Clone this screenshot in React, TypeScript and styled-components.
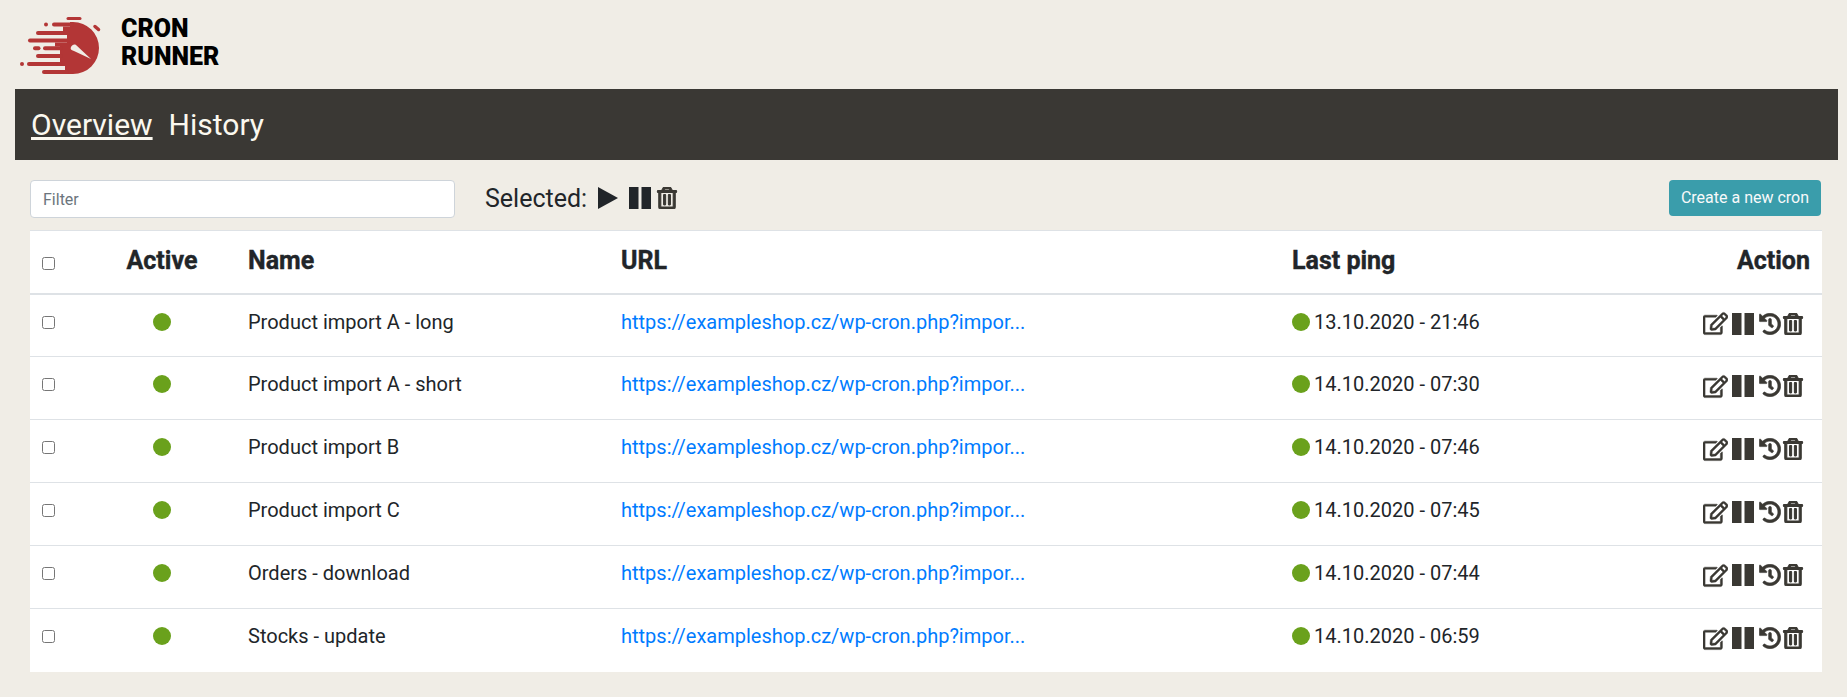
import React from "react";
import styled, { createGlobalStyle } from "styled-components";
import { FaRegEdit, FaHistory, FaRegTrashAlt } from "react-icons/fa";

const Global = createGlobalStyle`
  html, body { margin: 0; padding: 0; background: #f0ede6; }
  body { font-family: Roboto, "Liberation Sans", sans-serif; color: #212529; }
`;

const Page = styled.div`
  padding: 0 9px 0 15px;
`;
const Header = styled.header`
  display: flex;
  align-items: center;
  height: 89px;
  gap: 16px;
`;
const Brand = styled.div`
  font-family: Roboto, sans-serif;
  font-weight: 900;
  font-size: 25px;
  line-height: 28px;
  color: #000;
  position: relative;
  top: -2px;
`;
const Nav = styled.nav`
  display: flex;
  align-items: center;
  gap: 16px;
  height: 71px;
  background: #3a3834;
  padding: 0 16px;
`;
const NavLink = styled.a<{ $active?: boolean }>`
  font-size: 30px;
  color: #fbf8ef;
  text-decoration: ${(p) => (p.$active ? "underline" : "none")};
`;
const Content = styled.main`
  padding: 20px 17px 0 15px;
`;
const Toolbar = styled.div`
  display: flex;
  align-items: flex-start;
  height: 38px;
  margin-bottom: 12px;
`;
const FilterInput = styled.input`
  box-sizing: border-box;
  width: 425px;
  height: 38px;
  padding: 6px 12px;
  font: 16px Roboto, sans-serif;
  color: #495057;
  background: #fff;
  border: 1px solid #ced4da;
  border-radius: 4px;
  &::placeholder { color: #6c757d; }
`;
const Selected = styled.div`
  display: flex;
  align-items: center;
  height: 36px;
  margin-left: 30px;
  font-size: 25px;
  color: #212529;
  svg { display: block; }
`;
const SelectedLabel = styled.span`
  margin-right: 11px;
`;
const PlayIcon = styled.svg`
  margin-right: 11px;
`;
const PauseIcon = styled.svg`
  margin-right: 5px;
`;
const CreateButton = styled.button`
  margin-left: auto;
  width: 152px;
  height: 36px;
  padding: 0 0 2px;
  font: 16px Roboto, sans-serif;
  color: #f8f9fa;
  background: #3a9dab;
  border: 0;
  border-radius: 4px;
`;
const Table = styled.table`
  width: 100%;
  table-layout: fixed;
  border-collapse: collapse;
  background: #fff;
`;
const Th = styled.th<{ $align?: string }>`
  height: 63px;
  padding: 0 12px 2px;
  box-sizing: border-box;
  font-size: 25px;
  font-weight: 700;
  -webkit-text-stroke: 0.4px #212529;
  text-align: ${(p) => p.$align || "left"};
  border-top: 1px solid #dee2e6;
  border-bottom: 2px solid #dee2e6;
`;
const Td = styled.td<{ $align?: string }>`
  height: 63px;
  padding: 12px 12px 0;
  box-sizing: border-box;
  font-size: 20px;
  line-height: 30px;
  vertical-align: top;
  text-align: ${(p) => p.$align || "left"};
  border-top: 1px solid #dee2e6;
`;
const Check = styled.input`
  display: block;
  width: 13px;
  height: 13px;
  margin: 0;
`;
const HeadCheck = styled(Check)`
  margin-top: 6px;
`;
const RowCheck = styled(Check)`
  margin-top: 9px;
`;
const Dot = styled.span`
  display: inline-block;
  width: 18px;
  height: 18px;
  border-radius: 50%;
  background: #6aa11c;
  vertical-align: -2px;
`;
const PingDot = styled(Dot)`
  margin-right: 4px;
`;
const UrlLink = styled.a`
  color: #007bff;
  text-decoration: none;
`;
const Actions = styled.div`
  display: flex;
  justify-content: flex-end;
  align-items: center;
  height: 30px;
  gap: 4px;
  color: #3a3833;
  padding-right: 6px;
  padding-top: 4px;
  box-sizing: border-box;
  svg { display: block; }
`;
const HeavyEdit = styled(FaRegEdit)`
  stroke: currentColor;
  stroke-width: 10px;
`;
const HeavyHistory = styled(FaHistory)`
  margin: 0 -3px 0 1px;
  stroke: currentColor;
  stroke-width: 14px;
`;
const HeavyTrash = styled(FaRegTrashAlt)`
  stroke: currentColor;
  stroke-width: 24px;
`;

const Pause = ({ className }: { className?: string }) => (
  <svg className={className} width="22" height="22" viewBox="0 0 22 22" aria-hidden="true">
    <path d="M0 0h9.500v22H0zM12.500 0H22v22h-9.500z" fill="currentColor" />
  </svg>
);

const RED = "#b33636";
const Logo = () => (
  <svg width="90" height="64" viewBox="15 8 90 64" aria-hidden="true">
    <path d="M68 13.500h12" stroke={RED} strokeWidth="3" strokeLinecap="round" fill="none" />
    <path d="M95 21.500l3.500 3" stroke={RED} strokeWidth="3.500" strokeLinecap="round" fill="none" />
    <path d="M70 17h3a26 26 0 0 1 0 52H65v-8H55v-4h5V41.500h-5v-4h12V26h-4v-4.500h7z" fill={RED} />
    <g stroke={RED} strokeWidth="4" strokeLinecap="round" fill="none">
      <path d="M54 19.500h18" />
      <path d="M38 28h30" />
      <path d="M30 35.500h38" />
      <path d="M35 43.300h3.500" />
      <path d="M45 43.300h16" />
      <path d="M38 51h23" />
      <path d="M29 59h27" />
      <path d="M44 67h23" />
    </g>
    <circle cx="46" cy="19.500" r="2" fill={RED} />
    <circle cx="22" cy="59" r="2" fill={RED} />
    <path d="M71 42c1-2 3-3 5-2l15 14-17-8c-3-1-4-2-3-4z" fill="#f0ede6" />
  </svg>
);

const rows = [
  ["Product import A - long", "13.10.2020 - 21:46"],
  ["Product import A - short", "14.10.2020 - 07:30"],
  ["Product import B", "14.10.2020 - 07:46"],
  ["Product import C", "14.10.2020 - 07:45"],
  ["Orders - download", "14.10.2020 - 07:44"],
  ["Stocks - update", "14.10.2020 - 06:59"],
];

export default function App() {
  return (
    <Page>
      <Global />
      <Header>
        <Logo />
        <Brand>CRON<br />RUNNER</Brand>
      </Header>
      <Nav>
        <NavLink $active>Overview</NavLink>
        <NavLink>History</NavLink>
      </Nav>
      <Content>
        <Toolbar>
          <FilterInput placeholder="Filter" />
          <Selected>
            <SelectedLabel>Selected:</SelectedLabel>
            <PlayIcon width="20" height="22" viewBox="0 0 20 22" aria-hidden="true">
              <path d="M0 0l20 11L0 22z" fill="currentColor" />
            </PlayIcon>
            <PauseIcon as={Pause} />
            <HeavyTrash size={22} color="#3a3833" />
          </Selected>
          <CreateButton>Create a new cron</CreateButton>
        </Toolbar>
        <Table>
          <colgroup>
            <col width="58" />
            <col width="148" />
            <col width="373" />
            <col width="671" />
            <col width="300" />
            <col width="242" />
          </colgroup>
          <thead>
            <tr>
              <Th><HeadCheck type="checkbox" /></Th>
              <Th $align="center">Active</Th>
              <Th>Name</Th>
              <Th>URL</Th>
              <Th>Last ping</Th>
              <Th $align="right">Action</Th>
            </tr>
          </thead>
          <tbody>
            {rows.map(([name, ping]) => (
              <tr key={name}>
                <Td><RowCheck type="checkbox" /></Td>
                <Td $align="center"><Dot /></Td>
                <Td>{name}</Td>
                <Td><UrlLink>https://exampleshop.cz/wp-cron.php?impor...</UrlLink></Td>
                <Td><PingDot />{ping}</Td>
                <Td>
                  <Actions>
                    <HeavyEdit size={25} />
                    <Pause />
                    <HeavyHistory size={22} />
                    <HeavyTrash size={22} />
                  </Actions>
                </Td>
              </tr>
            ))}
          </tbody>
        </Table>
      </Content>
    </Page>
  );
}
